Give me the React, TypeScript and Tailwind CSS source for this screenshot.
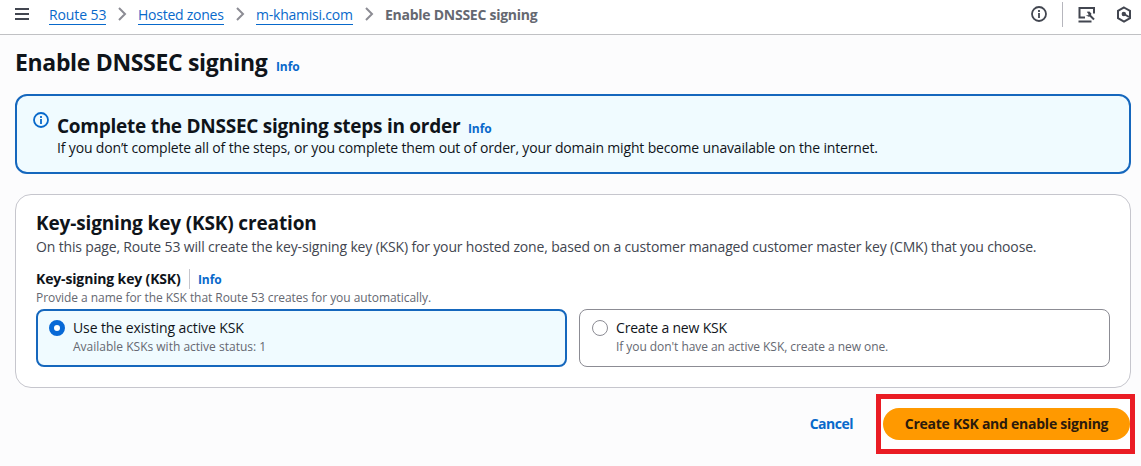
import React from "react";

const Info = ({ className = "" }: { className?: string }) => (
  <a className={`text-[12px] font-bold leading-4 tracking-[-0.1px] text-[#0869cb] ${className}`}>Info</a>
);

const Chevron = () => (
  <span className="flex w-8 shrink-0 justify-center">
    <svg width="10" height="14" viewBox="0 0 10 14" fill="none" stroke="#8c8c94" strokeWidth="2">
      <path d="M2 1l6 6-6 6" />
    </svg>
  </span>
);

const InfoIcon = ({ className }: { className: string }) => (
  <svg className={`shrink-0 ${className}`} width="16" height="16" viewBox="0 0 16 16" fill="none" stroke="currentColor" strokeWidth="1.8">
    <circle cx="8" cy="8" r="7" />
    <path d="M8 4v2M8 7v5" />
  </svg>
);

const Crumb = ({ className, children }: { className: string; children: React.ReactNode }) => (
  <a className={`h-[19px] shrink-0 whitespace-nowrap border-b border-[#0869cb] leading-[18px] text-[#0869cb] ${className}`}>{children}</a>
);

export default function App() {
  return (
    <div className="flex h-[466px] w-[1141px] flex-col overflow-hidden whitespace-nowrap bg-[#fcfcfd] font-['Open_Sans',sans-serif] text-[14px] text-[#0f141a]">
      <header className="flex h-[35px] shrink-0 items-center border-b border-[#c0c1c4] bg-white pb-[6px] pl-[15px] pr-[9px]">
        <svg width="14" height="14" viewBox="0 0 14 14" stroke="#424650" strokeWidth="2"><path d="M0 2h14M0 7h14M0 12h14" /></svg>
        <Crumb className="ml-5 mt-[3px] w-[57px] tracking-[-0.1px]">Route 53</Crumb>
        <Chevron />
        <Crumb className="mt-[3px] w-[86px] tracking-[-0.25px]">Hosted zones</Crumb>
        <Chevron />
        <Crumb className="mt-[3px] w-[97px] tracking-[-0.23px]">m-khamisi.com</Crumb>
        <Chevron />
        <span className="font-bold tracking-[-0.26px] text-[#656871]">Enable DNSSEC signing</span>
        <div className="ml-auto flex items-center text-[#424650]">
          <InfoIcon className="" />
          <span className="ml-[15px] mr-[15px] h-[25px] w-px bg-[#b6b6bd]" />
          <svg width="18" height="17" viewBox="0 0 18 17" fill="none" stroke="currentColor" strokeWidth="2">
            <path d="M7 11.5H1.5V2H16v5.5M.5 15.5h13" />
            <path d="M11.5 9l4.5 4.5" />
            <path d="M8.8 5.8l2.6-.2 2 2-.6 2.4-2.2.8-2.9-1.6h2.7V8z" fill="currentColor" stroke="none" />
          </svg>
          <svg className="ml-[20px]" width="16" height="17" viewBox="0 0 16 17" fill="none" stroke="currentColor" strokeWidth="2">
            <path d="M8 1.5l6 3.4v7.2l-6 3.4-6-3.4V4.9z" />
            <circle cx="7.8" cy="8" r="2.2" fill="currentColor" stroke="none" />
            <path d="M8 8l5 3" />
          </svg>
        </div>
      </header>
      <main className="flex flex-col pl-[15px] pr-[10px]">
        <div className="flex h-[59px] items-baseline pt-[12px]">
          <h1 className="w-[261px] text-[23px] font-bold leading-[30px] tracking-[-0.33px]">Enable DNSSEC signing</h1>
          <Info />
        </div>
        <section className="flex h-[80px] rounded-xl border-2 border-[#1567bd] bg-[#f0fbff] pl-4 pt-4">
          <InfoIcon className="text-[#0869cb]" />
          <div className="ml-2 pt-[2px]">
            <div className="flex h-6 items-baseline">
              <h2 className="w-[411px] text-[19px] font-bold leading-6 tracking-[-0.26px]">Complete the DNSSEC signing steps in order</h2>
              <Info />
            </div>
            <p className="leading-5 tracking-[-0.16px]">If you don’t complete all of the steps, or you complete them out of order, your domain might become unavailable on the internet.</p>
          </div>
        </section>
        <section className="mt-5 h-[194px] rounded-2xl border border-[#c6c6cd] bg-white px-5 pt-4">
          <h2 className="text-[19px] font-bold leading-6 tracking-[-0.14px]">Key-signing key (KSK) creation</h2>
          <p className="mt-[2px] leading-5 tracking-[-0.16px] text-[#424650]">On this page, Route 53 will create the key-signing key (KSK) for your hosted zone, based on a customer managed customer master key (CMK) that you choose.</p>
          <div className="mt-3 flex h-5 items-center">
            <h3 className="w-[145px] pb-px font-bold leading-5 tracking-[-0.15px]">Key-signing key (KSK)</h3>
            <span className="ml-2 mr-2 h-5 w-px bg-[#c6c6cd]" />
            <Info className="pt-px" />
          </div>
          <p className="text-[12px] leading-[18px] tracking-[-0.06px] text-[#656871]">Provide a name for the KSK that Route 53 creates for you automatically.</p>
          <div className="mt-[2px] grid grid-cols-2 gap-3">
            <label className="flex h-[58px] rounded-lg border-2 border-[#1567bd] bg-[#f0fbff] pl-[11px] pt-[9px]">
              <span className="size-4 shrink-0 rounded-full border-[5px] border-[#0869d6] bg-white" />
              <span className="ml-2 flex flex-col">
                <span className="mt-[-2px] leading-5 tracking-[-0.1px]">Use the existing active KSK</span>
                <span className="text-[12px] leading-[18px] text-[#656871]">Available KSKs with active status: 1</span>
              </span>
            </label>
            <label className="flex h-[58px] rounded-lg border border-[#8c8c94] bg-white pl-3 pt-[10px]">
              <span className="size-4 shrink-0 rounded-full border border-[#8c8c94] bg-white" />
              <span className="ml-2 flex flex-col">
                <span className="mt-[-2px] leading-5 tracking-[-0.18px]">Create a new KSK</span>
                <span className="text-[12px] leading-[18px] tracking-[-0.06px] text-[#656871]">If you don't have an active KSK, create a new one.</span>
              </span>
            </label>
          </div>
        </section>
      </main>
      <footer className="mt-[6px] flex items-center justify-end pr-[6px]">
        <button className="mr-[23px] pb-[2px] font-bold tracking-[-0.5px] text-[#0869cb]">Cancel</button>
        <div className="flex h-[60px] w-[259px] items-center border-[5px] border-[#ea1c24] bg-white pl-[2px]">
          <button className="h-8 w-[247px] rounded-full bg-[#ff9900] pb-[2px] font-bold tracking-[-0.25px] text-[#2b1a0c]">Create KSK and enable signing</button>
        </div>
      </footer>
    </div>
  );
}
